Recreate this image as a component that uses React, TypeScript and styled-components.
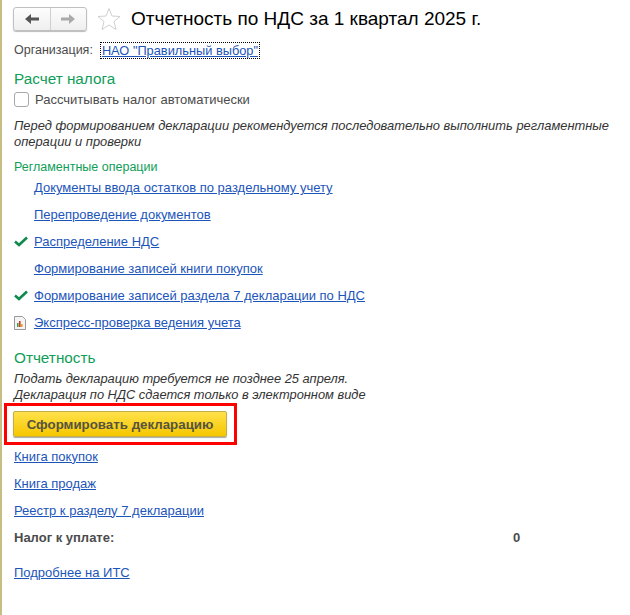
import React from "react";
import styled, { createGlobalStyle } from "styled-components";

const Global = createGlobalStyle`
  html, body { margin: 0; padding: 0; background: #fff; }
  body { font-family: "Liberation Sans", Arial, sans-serif; }
`;

const Page = styled.div`
  width: 630px;
  height: 615px;
  box-sizing: border-box;
  border-left: 2px solid #c8bd82;
  padding: 6px 0 0 12px;
  overflow: hidden;
  font-size: 13px;
  color: #4b4b4b;
`;

const Header = styled.div`
  display: flex;
  align-items: center;
  height: 25px;
`;

const NavGroup = styled.div`
  display: flex;
  width: 74px;
  height: 24px;
  margin-left: -1px;
  border: 1px solid #c0c0c0;
  border-radius: 3px;
  box-sizing: border-box;
  background: linear-gradient(#fdfdfd, #efefef);
  box-shadow: 0 1px 1px #bbb;
`;

const NavButton = styled.div<{ $divided?: boolean }>`
  flex: 1;
  display: flex;
  align-items: center;
  justify-content: center;
  border-left: ${(p) => (p.$divided ? "1px solid #d0d0d0" : "none")};
`;

const StarWrap = styled.div`
  display: flex;
  margin-left: 10px;
`;

const Title = styled.h1`
  margin: 0 0 0 10px;
  font-size: 19px;
  font-weight: 400;
  color: #000;
  white-space: nowrap;
  font-family: "Liberation Sans", Arial, sans-serif;
`;

const OrgRow = styled.div`
  display: flex;
  align-items: center;
  margin-top: 11px;
  height: 16px;
  gap: 8px;
  font-size: 12.5px;
`;

const OrgLink = styled.a`
  font-size: 12.8px;
  color: #1c55ba;
  text-decoration: underline;
  outline: 1px dotted #000;
  padding: 0 1px;
`;

const SectionTitle = styled.div<{ $top: number }>`
  margin-top: ${(p) => p.$top}px;
  font-size: 15.3px;
  line-height: 18px;
  color: #0f9d58;
`;

const CheckRow = styled.label`
  display: flex;
  align-items: center;
  gap: 6px;
  margin-top: 2px;
  height: 18px;
`;

const CheckBox = styled.span`
  width: 13px;
  height: 13px;
  border: 1px solid #a8a8a8;
  border-radius: 3px;
  background: #fff;
`;

const Note = styled.p`
  margin: 10px 0 0;
  font-size: 12.9px;
  line-height: 16px;
  font-style: italic;
  color: #333;
  width: 604px;
`;

const SubTitle = styled.div`
  margin-top: 10px;
  font-size: 12.5px;
  line-height: 14px;
  color: #0f9d58;
`;

const OpList = styled.div`
  display: flex;
  flex-direction: column;
`;

const OpRow = styled.div`
  display: flex;
  align-items: center;
  height: 27px;
`;

const OpIcon = styled.span`
  display: flex;
  width: 20px;
  justify-content: flex-start;
`;

const TextLink = styled.a`
  color: #1c55ba;
  text-decoration: underline;
`;

const ReportNote = styled.p`
  margin: 4px 0 0;
  font-size: 12.85px;
  line-height: 16px;
  font-style: italic;
  color: #333;
`;

const Highlight = styled.div`
  width: 221px;
  height: 36px;
  margin: 0 0 0 -10px;
  border: 3px solid #f00;
  box-sizing: content-box;
  display: flex;
  align-items: center;
  padding-left: 6px;
`;

const PrimaryButton = styled.button`
  width: 214px;
  height: 26px;
  padding: 0;
  border: 1px solid #c4b04a;
  border-radius: 2px;
  background: linear-gradient(#ffe14a, #f6c600);
  box-shadow: 0 1px 1px #aaa;
  font: 700 13.3px "Liberation Sans", Arial, sans-serif;
  color: #56543f;
`;

const LinkList = styled.div`
  display: flex;
  flex-direction: column;
  gap: 11px;
  margin-top: 3px;
`;

const LinkRow = styled.div`
  height: 16px;
  display: flex;
  align-items: center;
`;

const TaxRow = styled.div`
  display: grid;
  grid-template-columns: 499px auto;
  height: 16px;
  align-items: center;
  font-weight: 700;
`;

const MoreRow = styled.div`
  margin-top: 19px;
  height: 16px;
  display: flex;
  align-items: center;
`;

const Check = () => (
  <svg width="14" height="11" viewBox="0 0 14 11">
    <path d="M1 5.5 L5 9 L13 1.5" fill="none" stroke="#0e8a4a" strokeWidth="2.6" />
  </svg>
);

const Report = () => (
  <svg width="12" height="14" viewBox="0 0 12 14">
    <path d="M.5.5H8.5L11.5 3.5V13.5H.5Z" fill="#f4f4f4" stroke="#999" />
    <rect x="3" y="7" width="1.6" height="4" fill="#2aa84a" />
    <rect x="5" y="5" width="1.6" height="6" fill="#e03020" />
    <rect x="7" y="8" width="1.6" height="3" fill="#e0a020" />
  </svg>
);

const Star = () => (
  <svg width="24" height="24" viewBox="0 0 24 24">
    <path
      d="M12 1.5 L15 9 L23 9.5 L17 14.5 L19 22.5 L12 18 L5 22.5 L7 14.5 L1 9.5 L9 9 Z"
      fill="#fff"
      stroke="#cfcfcf"
    />
  </svg>
);

const Arrow = ({ dir, color }: { dir: "l" | "r"; color: string }) => (
  <svg width="14" height="12" viewBox="0 0 14 12">
    <path d={dir === "l" ? "M0 6 L6 1 V4.5 H14 V7.5 H6 V11 Z" : "M14 6 L8 1 V4.5 H0 V7.5 H8 V11 Z"} fill={color} />
  </svg>
);

const ops: { label: string; icon?: React.ReactNode }[] = [
  { label: "Документы ввода остатков по раздельному учету" },
  { label: "Перепроведение документов" },
  { label: "Распределение НДС", icon: <Check /> },
  { label: "Формирование записей книги покупок" },
  { label: "Формирование записей раздела 7 декларации по НДС", icon: <Check /> },
  { label: "Экспресс-проверка ведения учета", icon: <Report /> },
];

export default function App() {
  return (
    <Page>
      <Global />
      <Header>
        <NavGroup>
          <NavButton><Arrow dir="l" color="#555" /></NavButton>
          <NavButton $divided><Arrow dir="r" color="#aaa" /></NavButton>
        </NavGroup>
        <StarWrap><Star /></StarWrap>
        <Title>Отчетность по НДС за 1 квартал 2025 г.</Title>
      </Header>
      <OrgRow>
        <span>Организация:</span>
        <OrgLink>НАО "Правильный выбор"</OrgLink>
      </OrgRow>
      <SectionTitle $top={12}>Расчет налога</SectionTitle>
      <CheckRow>
        <CheckBox />
        Рассчитывать налог автоматически
      </CheckRow>
      <Note>
        Перед формированием декларации рекомендуется последовательно выполнить регламентные операции и проверки
      </Note>
      <SubTitle>Регламентные операции</SubTitle>
      <OpList>
        {ops.map((o) => (
          <OpRow key={o.label}>
            <OpIcon>{o.icon}</OpIcon>
            <TextLink>{o.label}</TextLink>
          </OpRow>
        ))}
      </OpList>
      <SectionTitle $top={13}>Отчетность</SectionTitle>
      <ReportNote>
        Подать декларацию требуется не позднее 25 апреля.
        <br />
        Декларация по НДС сдается только в электронном виде
      </ReportNote>
      <Highlight>
        <PrimaryButton>Сформировать декларацию</PrimaryButton>
      </Highlight>
      <LinkList>
        <LinkRow><TextLink>Книга покупок</TextLink></LinkRow>
        <LinkRow><TextLink>Книга продаж</TextLink></LinkRow>
        <LinkRow><TextLink>Реестр к разделу 7 декларации</TextLink></LinkRow>
        <TaxRow><span>Налог к уплате:</span><span>0</span></TaxRow>
      </LinkList>
      <MoreRow><TextLink>Подробнее на ИТС</TextLink></MoreRow>
    </Page>
  );
}
